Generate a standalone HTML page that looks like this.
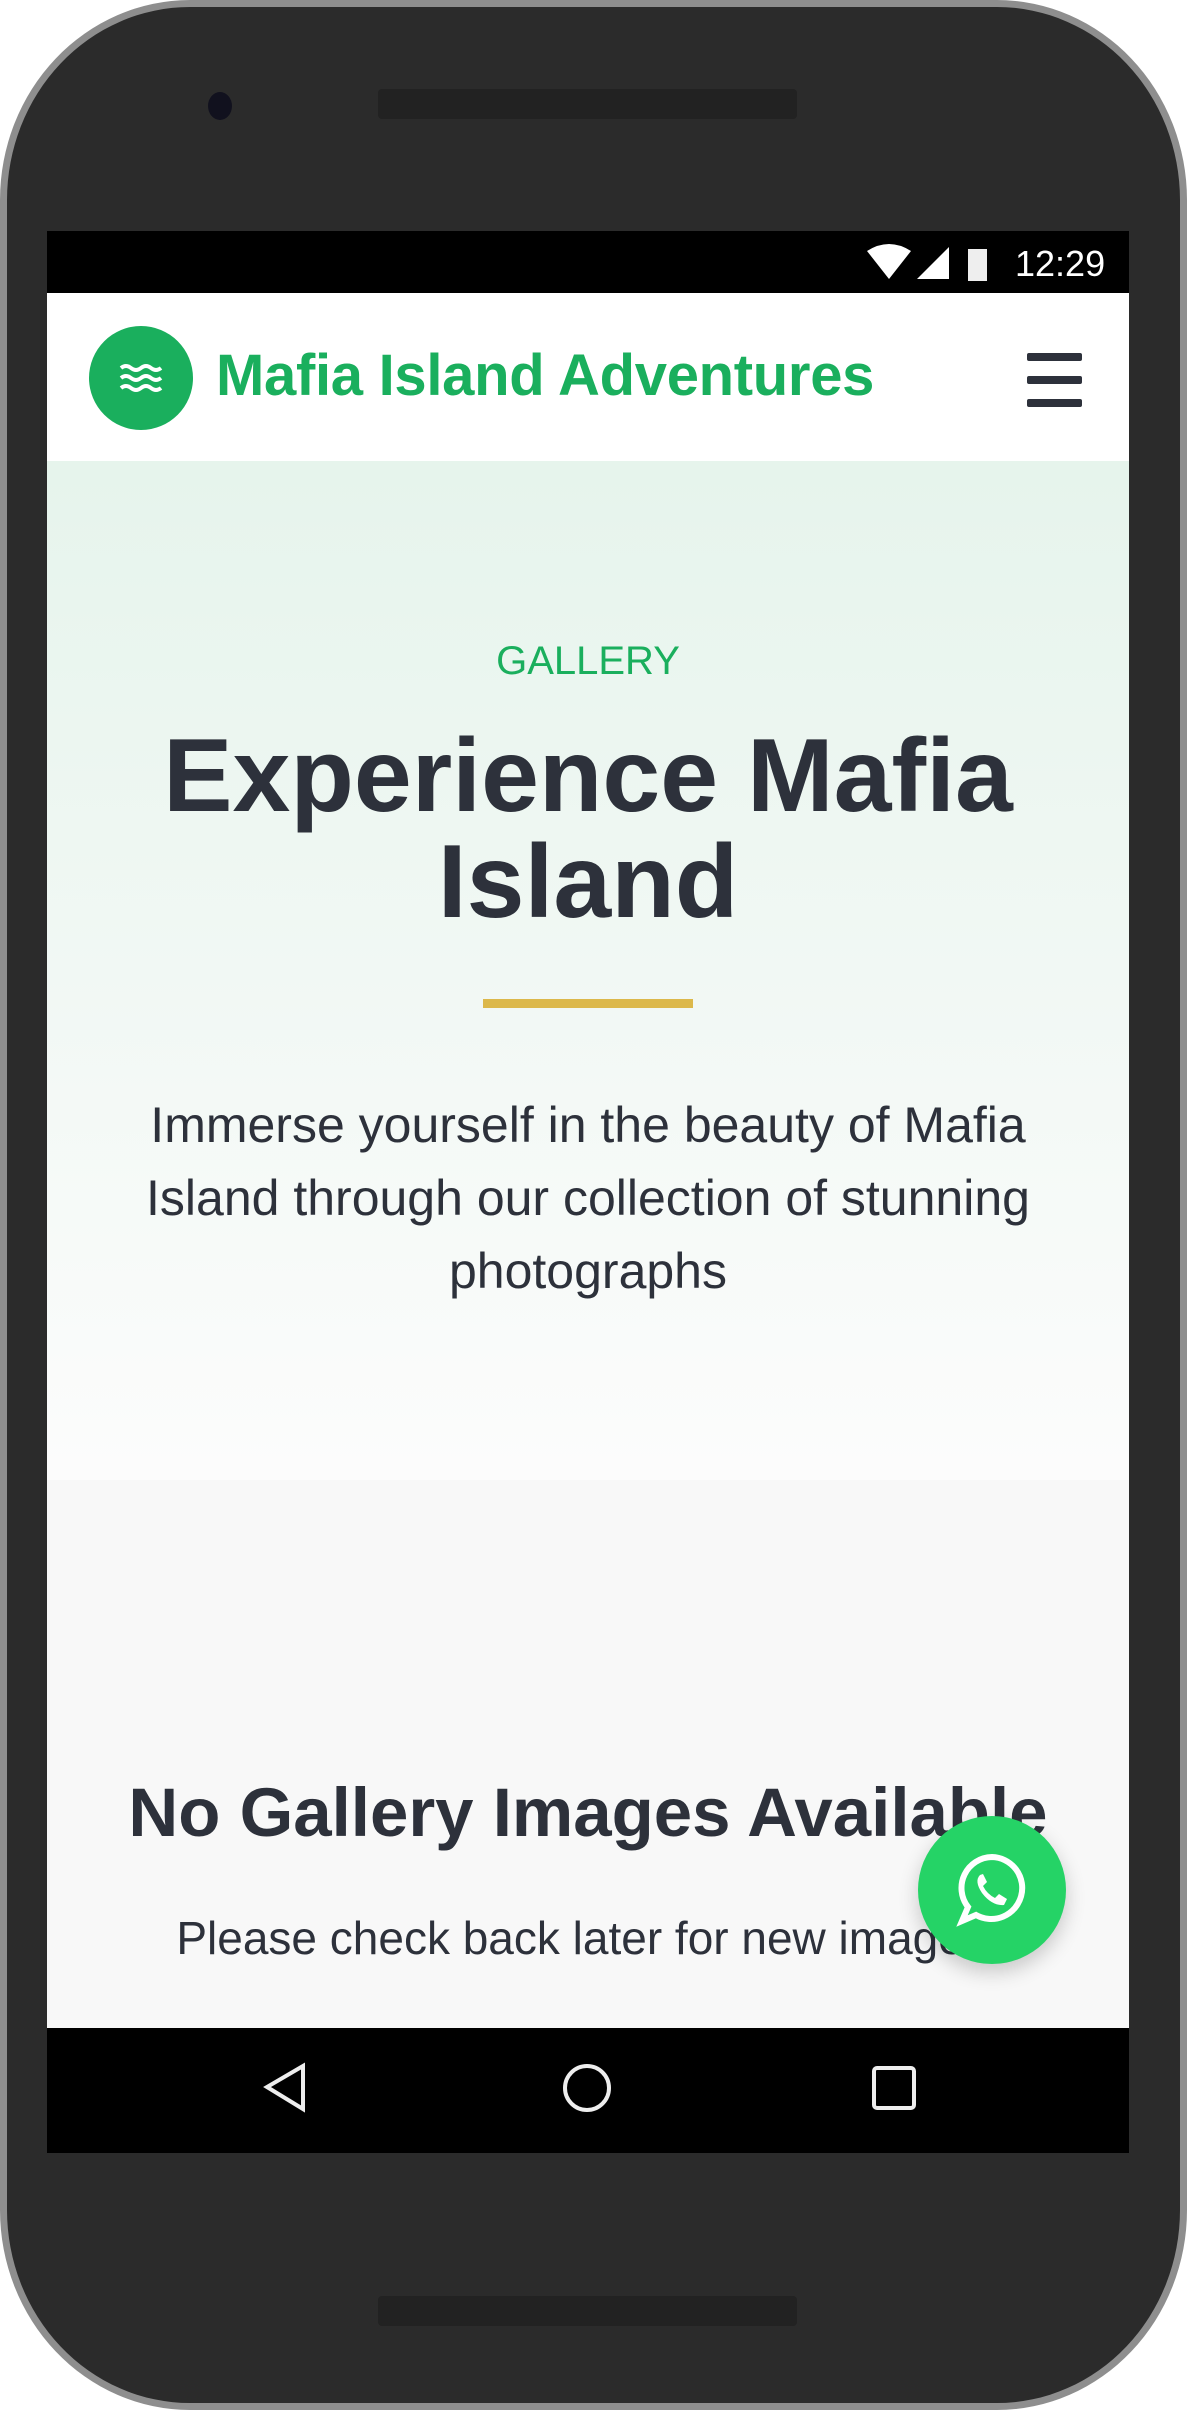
<!DOCTYPE html>
<html><head><meta charset="utf-8"><style>
*{margin:0;padding:0;box-sizing:border-box}
body{width:1187px;height:2410px;background:#fff;position:relative;overflow:hidden;font-family:"Liberation Sans",sans-serif}
.phone{position:absolute;left:0;top:0;width:1187px;height:2410px;border-radius:190px/200px;background:#2b2b2b;border:7px solid #8e8e8e}
.abs{position:absolute}
.screen{position:absolute;left:47px;top:231px;width:1082px;height:1922px;overflow:hidden;background:#f8f8f8}
.c{text-align:center;width:100%;left:0}
</style></head><body>
<div class="phone"></div>
<div class="abs" style="left:208px;top:92px;width:24px;height:28px;border-radius:50%;background:#11111e"></div>
<div class="abs" style="left:378px;top:89px;width:419px;height:30px;border-radius:4px;background:#222"></div>
<div class="abs" style="left:378px;top:2296px;width:419px;height:30px;border-radius:4px;background:#222"></div>
<div class="screen">
 <div class="abs" style="left:0;top:0;width:1082px;height:62px;background:#000"></div>
 <svg class="abs" style="left:820px;top:12px" width="120" height="40" viewBox="0 0 120 40">
  <path d="M0 8 Q22 -6 44 8 L22 36 Z" fill="#fff"/>
  <path d="M50 36 L82 4 L82 36 Z" fill="#fff"/>
  <rect x="101" y="6" width="22" height="32" fill="#eee"/>
 </svg>
 <div class="abs" style="left:968px;top:12px;color:#fff;font-size:36px">12:29</div>
 <div class="abs" style="left:0;top:62px;width:1082px;height:168px;background:#fff"></div>
 <div class="abs" style="left:42px;top:95px;width:104px;height:104px;border-radius:50%;background:#1aaf5d"></div>
 <svg class="abs" style="left:72px;top:132px" width="44" height="30" viewBox="0 0 44 30"><g fill="none" stroke="#fff" stroke-width="4"><path d="M2 5 q5-4 10 0 t10 0 t10 0 t10 0"/><path d="M2 15 q5-4 10 0 t10 0 t10 0 t10 0"/><path d="M2 25 q5-4 10 0 t10 0 t10 0 t10 0"/></g></svg>
 <div class="abs" style="left:169px;top:111px;color:#1aaf5d;font-size:58px;font-weight:bold;letter-spacing:-0.3px">Mafia Island Adventures</div>
 <div class="abs" style="left:980px;top:122px;width:55px;height:8px;background:#2d313b;border-radius:2px"></div>
 <div class="abs" style="left:980px;top:145px;width:55px;height:8px;background:#2d313b;border-radius:2px"></div>
 <div class="abs" style="left:980px;top:168px;width:55px;height:8px;background:#2d313b;border-radius:2px"></div>
 <div class="abs" style="left:0;top:230px;width:1082px;height:1019px;background:linear-gradient(#e6f4ec,#fcfcfc)"></div>
 <div class="abs c" style="top:408px;color:#1aaf5d;font-size:40px">GALLERY</div>
 <div class="abs c" style="top:492px;color:#2d313b;font-size:104px;font-weight:bold;line-height:106px">Experience Mafia<br>Island</div>
 <div class="abs" style="left:436px;top:768px;width:210px;height:9px;background:#dcb84a"></div>
 <div class="abs c" style="top:858px;color:#2d313b;font-size:50px;line-height:73px;padding:0 92px">Immerse yourself in the beauty of Mafia Island through our collection of stunning photographs</div>
 <div class="abs c" style="top:1542px;color:#2d313b;font-size:69px;font-weight:bold">No Gallery Images Available</div>
 <div class="abs c" style="top:1680px;color:#2d313b;font-size:46px">Please check back later for new images.</div>
 <div class="abs" style="left:871px;top:1585px;width:148px;height:148px;border-radius:50%;background:#25d366;box-shadow:0 8px 20px rgba(0,0,0,.2)"></div>
 <svg class="abs" style="left:909px;top:1622px" width="72" height="74" viewBox="0 0 72 74"><path d="M36 4 A31 31 0 1 1 20 62 L6 68 L12 54 A31 31 0 0 1 36 4 Z" fill="none" stroke="#fff" stroke-width="6"/><path d="M24 22 q-6 6 2 18 q10 13 22 12 l3-6 -8-5 -4 4 q-8-4 -12-12 l4-4 -4-8 z" fill="#fff"/></svg>
 <div class="abs" style="left:0;top:1797px;width:1082px;height:125px;background:#000"></div>
 <svg class="abs" style="left:0;top:1815px" width="1082" height="125" viewBox="0 0 1082 125"><g fill="none" stroke="#eee" stroke-width="4"><path d="M256 20 L256 63 L220 41 Z"/><circle cx="540" cy="42" r="22"/><rect x="827" y="22" width="40" height="40" rx="3"/></g></svg>
</div>
</body></html>
